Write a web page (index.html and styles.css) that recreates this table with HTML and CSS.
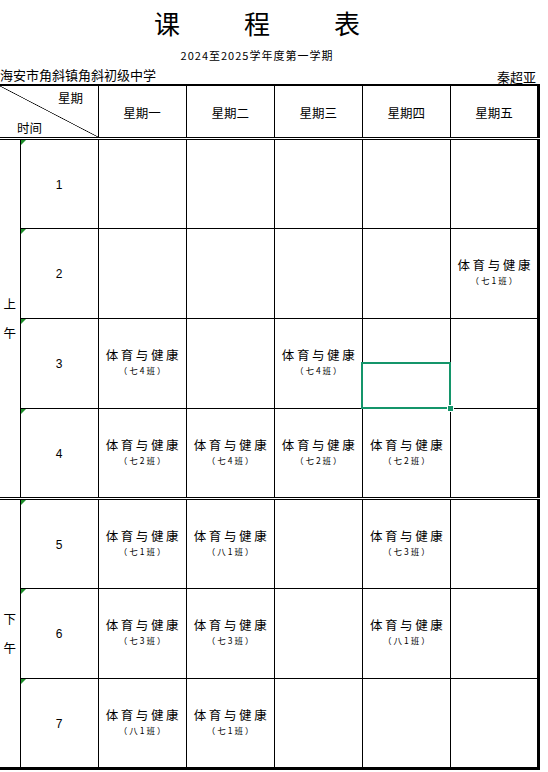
FILE: index.html
```html
<!DOCTYPE html>
<html lang="zh-CN">
<head>
<meta charset="utf-8">
<title>课程表</title>
<link rel="stylesheet" href="styles.css">
</head>
<body>
<div class="page">
  <h1 class="title"><span>课</span><span>程</span><span>表</span></h1>
  <div class="subtitle">2024至2025学年度第一学期</div>
  <div class="meta"><span class="school">海安市角斜镇角斜初级中学</span><span class="teacher">秦超亚</span></div>
  <div class="sheet">
    <table class="tt">
      <colgroup><col class="c0"><col class="c1"><col class="cd"><col class="cd"><col class="cd"><col class="cd"><col class="cd"></colgroup>
      <thead>
        <tr class="hd">
          <th colspan="2" class="diag"><span class="d-top">星期</span><span class="d-bot">时间</span></th>
          <th>星期一</th><th>星期二</th><th>星期三</th><th>星期四</th><th>星期五</th>
        </tr>
      </thead>
      <tbody>
        <tr>
          <td rowspan="4" class="half am">上<br>午</td>
          <td class="p">1</td><td></td><td></td><td></td><td></td><td></td>
        </tr>
        <tr>
          <td class="p">2</td><td></td><td></td><td></td><td></td>
          <td><div class="cs">体育与健康</div><div class="cl">（七1班）</div></td>
        </tr>
        <tr>
          <td class="p">3</td>
          <td><div class="cs">体育与健康</div><div class="cl">（七4班）</div></td>
          <td></td>
          <td><div class="cs">体育与健康</div><div class="cl">（七4班）</div></td>
          <td></td><td></td>
        </tr>
        <tr class="split">
          <td class="p">4</td>
          <td><div class="cs">体育与健康</div><div class="cl">（七2班）</div></td>
          <td><div class="cs">体育与健康</div><div class="cl">（七4班）</div></td>
          <td><div class="cs">体育与健康</div><div class="cl">（七2班）</div></td>
          <td><div class="cs">体育与健康</div><div class="cl">（七2班）</div></td>
          <td></td>
        </tr>
        <tr>
          <td rowspan="3" class="half pm">下<br>午</td>
          <td class="p">5</td>
          <td><div class="cs">体育与健康</div><div class="cl">（七1班）</div></td>
          <td><div class="cs">体育与健康</div><div class="cl">（八1班）</div></td>
          <td></td>
          <td><div class="cs">体育与健康</div><div class="cl">（七3班）</div></td>
          <td></td>
        </tr>
        <tr>
          <td class="p">6</td>
          <td><div class="cs">体育与健康</div><div class="cl">（七3班）</div></td>
          <td><div class="cs">体育与健康</div><div class="cl">（七3班）</div></td>
          <td></td>
          <td><div class="cs">体育与健康</div><div class="cl">（八1班）</div></td>
          <td></td>
        </tr>
        <tr>
          <td class="p">7</td>
          <td><div class="cs">体育与健康</div><div class="cl">（八1班）</div></td>
          <td><div class="cs">体育与健康</div><div class="cl">（七1班）</div></td>
          <td></td><td></td><td></td>
        </tr>
      </tbody>
    </table>
    <div class="selection"><span class="handle"></span></div>
  </div>
</div>
</body>
</html>
```
FILE: styles.css
```css
html, body {
  margin: 0;
  padding: 0;
  background: #fff;
}
body {
  width: 548px;
  height: 772px;
  overflow: hidden;
  font-family: "Noto Sans CJK SC", "Liberation Sans", sans-serif;
  color: #000;
}
.page {
  display: flex;
  flex-direction: column;
}
.title {
  margin: 0;
  height: 46px;
  padding-right: 34px;
  display: flex;
  justify-content: center;
  align-items: center;
  gap: 64px;
  font-size: 26px;
  font-weight: 400;
  line-height: 1;
}
.subtitle {
  height: 18px;
  padding-right: 34px;
  text-align: center;
  font-size: 11px;
  line-height: 18px;
  letter-spacing: 1px;
}
.meta {
  height: 20px;
  width: 536px;
  display: flex;
  justify-content: space-between;
  align-items: flex-end;
  font-size: 13px;
  line-height: 16px;
}
.school {
  margin-bottom: 1px;
}
.teacher {
  font-size: 13px;
  margin-bottom: -1px;
}
.sheet {
  position: relative;
}
.tt {
  border-collapse: collapse;
  table-layout: fixed;
  width: 540px;
  border-top: 2px solid #000;
  border-right: 3px solid #000;
  border-bottom: 3px solid #000;
}
.c0 { width: 20px; }
.c1 { width: 78px; }
.cd { width: 88px; }
.tt th, .tt td {
  border: 1px solid #000;
  padding: 0;
  text-align: center;
  vertical-align: middle;
  font-weight: 400;
}
.tt tr > :first-child {
  border-left: none;
}
.hd {
  height: 53px;
}
.hd th {
  border-bottom: 3px double #000;
  font-size: 12.5px;
  padding-top: 3px;
}
.tt tbody tr {
  height: 90px;
}
.tt tr.split td, .tt td.am {
  border-bottom: 3px double #000;
}
.diag {
  position: relative;
  background: linear-gradient(to top right, transparent calc(50% - 0.7px), #000 50%, transparent calc(50% + 0.7px));
}
.d-top {
  position: absolute;
  left: 58px;
  top: 2px;
}
.d-bot {
  position: absolute;
  left: 17px;
  bottom: 0;
}
.half {
  font-size: 12.5px;
  line-height: 29px;
}
.p {
  position: relative;
  font-family: "Liberation Sans", "Noto Sans CJK SC", sans-serif;
  font-size: 12px;
  padding-top: 2px !important;
}
.p::before {
  content: "";
  position: absolute;
  left: 0;
  top: 0;
  border-top: 5px solid #1d8f2a;
  border-right: 5px solid transparent;
}
.cs {
  font-size: 12.5px;
  letter-spacing: 2.6px;
  margin-right: -2.6px;
  line-height: 16px;
}
.cl {
  font-size: 8.5px;
  line-height: 14px;
  letter-spacing: 2px;
  margin-right: -2px;
  margin-bottom: 2px;
}
.selection {
  position: absolute;
  left: 361px;
  top: 278px;
  width: 86px;
  height: 43px;
  border: 2px solid #14956a;
}
.handle {
  position: absolute;
  right: -5px;
  bottom: -5px;
  width: 5px;
  height: 5px;
  background: #14956a;
  border: 1px solid #fff;
}
```
